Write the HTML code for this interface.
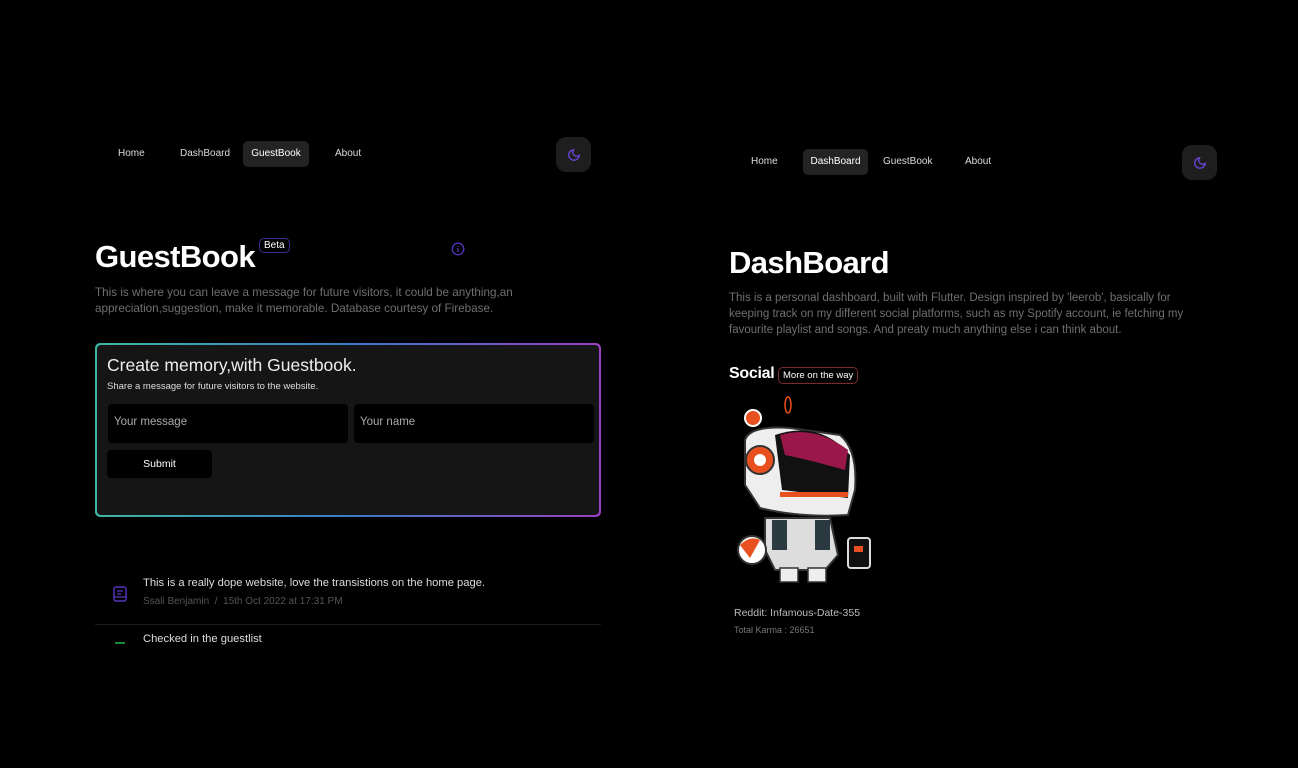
<!DOCTYPE html>
<html><head><meta charset="utf-8"><style>
*{margin:0;padding:0;box-sizing:border-box}
body{width:1298px;height:768px;background:#000;position:relative;overflow:hidden;font-family:"Liberation Sans",sans-serif;color:#fff}
.a{position:absolute;white-space:nowrap}
.nav{font-size:10px;color:#ddd}
.pill{background:#232323;border-radius:5px;color:#fff}
.moon{position:absolute;width:35px;height:35px;border-radius:10px;background:#1e1e1e;display:flex;align-items:center;justify-content:center}
.h1{font-size:31px;font-weight:bold;letter-spacing:-0.6px}
.p{font-size:11.8px;color:#6f6f6f;line-height:16px}
</style></head><body>
<div class="a nav" style="left:118px;top:148px">Home</div>
<div class="a nav" style="left:180px;top:148px">DashBoard</div>
<div class="a nav pill" style="left:243px;top:141px;width:66px;height:26px;line-height:25px;text-align:center">GuestBook</div>
<div class="a nav" style="left:335px;top:148px">About</div>
<div class="moon" style="left:556px;top:137px"><svg width="14" height="14" viewBox="0 0 24 24"><path d="M21 12.8A9 9 0 1 1 11.2 3a7 7 0 0 0 9.8 9.8z" fill="none" stroke="#6b45d8" stroke-width="2.3"/></svg></div>

<div class="a h1" style="left:95px;top:239px">GuestBook</div>
<div class="a" style="left:259px;top:238px;border:1px solid #3b2f8f;border-radius:5px;font-size:10px;padding:1px 4px">Beta</div>
<svg class="a" style="left:451px;top:242px" width="14" height="14" viewBox="0 0 14 14"><circle cx="7" cy="7" r="5.8" fill="none" stroke="#5535c0" stroke-width="1.3"/><path d="M7 6v4M7 4v.8" stroke="#5535c0" stroke-width="1.3"/></svg>
<div class="a p" style="left:95px;top:285px;font-size:11.7px">This is where you can leave a message for future visitors, it could be anything,an<br>appreciation,suggestion, make it memorable. Database courtesy of Firebase.</div>

<div class="a" style="left:95px;top:343px;width:506px;height:174px;border-radius:5px;padding:2px;background:linear-gradient(90deg,#3fb7a0,#3a7bc8 50%,#9a3fc0)">
 <div style="width:100%;height:100%;background:#151515;border-radius:4px;position:relative">
  <div class="a" style="left:10px;top:10px;font-size:17.5px;color:#eee">Create memory,with Guestbook.</div>
  <div class="a" style="left:10px;top:36px;font-size:9.5px;color:#ddd">Share a message for future visitors to the website.</div>
  <div class="a" style="left:11px;top:59px;width:240px;height:39px;background:#000;border-radius:4px;font-size:11.5px;color:#aaa;padding:12px 6px">Your message</div>
  <div class="a" style="left:257px;top:59px;width:240px;height:39px;background:#000;border-radius:4px;font-size:11.5px;color:#aaa;padding:12px 6px">Your name</div>
  <div class="a" style="left:10px;top:105px;width:105px;height:28px;background:#000;border-radius:4px;font-size:10.5px;line-height:28px;text-align:center">Submit</div>
 </div>
</div>

<svg class="a" style="left:113px;top:586px" width="14" height="16" viewBox="0 0 14 16"><rect x="1" y="1" width="12" height="14" rx="2" fill="none" stroke="#5535c0" stroke-width="1.4"/><path d="M4 5h6M4 8h4M1 11h12" stroke="#5535c0" stroke-width="1.3"/></svg>
<div class="a" style="left:143px;top:577px;font-size:11.2px;color:#ddd">This is a really dope website, love the transistions on the home page.</div>
<div class="a" style="left:143px;top:596px;font-size:10px;color:#555">Ssali Benjamin &nbsp;/ &nbsp;15th Oct 2022 at 17:31 PM</div>
<div class="a" style="left:95px;top:624px;width:506px;height:1px;background:#1a1a1a"></div>
<div class="a" style="left:143px;top:633px;font-size:11.2px;color:#ddd">Checked in the guestlist</div>
<div class="a" style="left:115px;top:642px;width:10px;height:2px;background:#1a8a3a"></div>

<div class="a nav" style="left:751px;top:156px">Home</div>
<div class="a nav pill" style="left:803px;top:149px;width:65px;height:26px;line-height:25px;text-align:center">DashBoard</div>
<div class="a nav" style="left:883px;top:156px">GuestBook</div>
<div class="a nav" style="left:965px;top:156px">About</div>
<div class="moon" style="left:1182px;top:145px"><svg width="14" height="14" viewBox="0 0 24 24"><path d="M21 12.8A9 9 0 1 1 11.2 3a7 7 0 0 0 9.8 9.8z" fill="none" stroke="#6b45d8" stroke-width="2.3"/></svg></div>

<div class="a h1" style="left:729px;top:245px">DashBoard</div>
<div class="a p" style="left:729px;top:290px;font-size:11.5px">This is a personal dashboard, built with Flutter. Design inspired by 'leerob', basically for<br>keeping track on my different social platforms, such as my Spotify account, ie fetching my<br>favourite playlist and songs. And preaty much anything else i can think about.</div>
<div class="a" style="left:729px;top:365px;font-size:16px;font-weight:bold;letter-spacing:-0.3px">Social</div>
<div class="a" style="left:778px;top:367px;border:1px solid #7a2a2a;border-radius:5px;font-size:9.5px;padding:2px 4px">More on the way</div>

<svg class="a" style="left:730px;top:390px" width="145" height="200" viewBox="0 0 145 200">
 <circle cx="23" cy="28" r="8" fill="#e8501f" stroke="#fff" stroke-width="2"/>
 <ellipse cx="58" cy="15" rx="3" ry="8" fill="none" stroke="#e8501f" stroke-width="1.5"/>
 <path d="M15 50 Q20 35 60 38 L110 45 Q128 60 125 100 L118 125 Q70 128 30 118 L15 95Z" fill="#eee" stroke="#333" stroke-width="2"/>
 <path d="M45 45 Q90 30 120 65 L118 108 L52 100Z" fill="#111"/>
 <path d="M50 45 Q85 35 118 60 L115 80 Q80 70 55 65Z" fill="#9a1849"/>
 <circle cx="30" cy="70" r="14" fill="#e8501f" stroke="#333" stroke-width="2"/>
 <circle cx="30" cy="70" r="6" fill="#fff"/>
 <rect x="50" y="102" width="68" height="5" fill="#e8501f"/>
 <path d="M35 128 L100 128 L108 165 L95 180 L45 180 L35 160Z" fill="#ddd" stroke="#333" stroke-width="2"/>
 <rect x="42" y="130" width="15" height="30" fill="#2a3a40"/>
 <rect x="85" y="130" width="15" height="30" fill="#2a3a40"/>
 <circle cx="22" cy="160" r="14" fill="#fff" stroke="#333" stroke-width="2"/>
 <path d="M10 155 Q20 145 30 150 L20 168Z" fill="#e8501f"/>
 <rect x="50" y="178" width="18" height="14" fill="#eee" stroke="#333" stroke-width="1.5"/>
 <rect x="78" y="178" width="18" height="14" fill="#eee" stroke="#333" stroke-width="1.5"/>
 <rect x="118" y="148" width="22" height="30" rx="3" fill="#111" stroke="#ddd" stroke-width="2"/>
 <rect x="124" y="156" width="9" height="6" fill="#e8501f"/>
</svg>
<div class="a" style="left:734px;top:607px;font-size:10.5px;color:#bbb">Reddit: Infamous-Date-355</div>
<div class="a" style="left:734px;top:625px;font-size:9px;color:#777">Total Karma : 26651</div>
</body></html>
